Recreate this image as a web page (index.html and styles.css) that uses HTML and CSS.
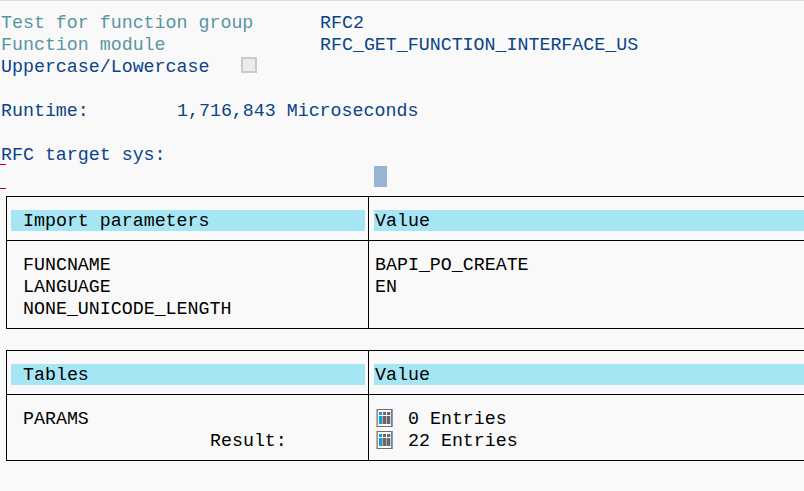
FILE: index.html
```html
<!DOCTYPE html>
<html lang="en">
<head>
<meta charset="utf-8">
<title>Test Function Module: Result Screen</title>
<link rel="stylesheet" href="styles.css">
</head>
<body>
<svg class="defs" width="0" height="0" aria-hidden="true">
  <symbol id="table-icon" viewBox="0 0 17 18">
    <rect x="0" y="0" width="17" height="18" fill="#6c6c72"/>
    <rect x="0" y="0" width="1" height="18" fill="#e0a878"/>
    <rect x="16" y="0" width="1" height="18" fill="#7c9cd0"/>
    <rect x="1" y="1" width="15" height="16" fill="#fff"/>
    <rect x="1" y="1" width="1" height="16" fill="#8294b4"/>
    <rect x="15" y="1" width="1" height="16" fill="#8c7c78"/>
    <rect x="3" y="3" width="3" height="3" fill="#0a9fe3"/>
    <rect x="3" y="7" width="3" height="8" fill="#0a9fe3"/>
    <path d="M7 3h3v3h-3zM7 7h3v8h-3zM11 3h3v3h-3zM11 7h3v8h-3z" fill="#666"/>
    <path d="M6 7h1v8h-1zM10 7h1v8h-1z" fill="#b9b2a8"/>
    <path d="M14 3h1v3h-1zM14 7h1v8h-1z" fill="#b8d5f5"/>
  </symbol>
</svg>
<main class="screen">
  <section class="info">
    <div class="line"><span class="label muted">Test for function group</span><span>RFC2</span></div>
    <div class="line"><span class="label muted">Function module</span><span>RFC_GET_FUNCTION_INTERFACE_US</span></div>
    <div class="line"><span class="case">Uppercase/Lowercase</span><span class="checkbox"></span></div>
    <div class="line"></div>
    <div class="line"><span class="runtime">Runtime:</span><span>1,716,843 Microseconds</span></div>
    <div class="line"></div>
    <div class="line">RFC target sys:</div>
  </section>
  <div class="entry"><span class="field"></span><span class="cursor"></span></div>
  <section class="grid">
    <div class="cell head"><span class="band first">Import parameters</span></div>
    <div class="cell head value"><span class="band">Value</span></div>
    <div class="cell body">
      <div class="line">FUNCNAME</div>
      <div class="line">LANGUAGE</div>
      <div class="line">NONE_UNICODE_LENGTH</div>
    </div>
    <div class="cell body value">
      <div class="line">BAPI_PO_CREATE</div>
      <div class="line">EN</div>
    </div>
  </section>
  <section class="grid">
    <div class="cell head"><span class="band first">Tables</span></div>
    <div class="cell head value"><span class="band">Value</span></div>
    <div class="cell body">
      <div class="line">PARAMS</div>
      <div class="line result">Result:</div>
    </div>
    <div class="cell body value">
      <div class="line"><svg class="icon" aria-hidden="true"><use href="#table-icon"/></svg>0 Entries</div>
      <div class="line"><svg class="icon" aria-hidden="true"><use href="#table-icon"/></svg>22 Entries</div>
    </div>
  </section>
</main>
</body>
</html>
```
FILE: styles.css
```css
* { box-sizing: border-box; }

body {
  margin: 0;
  background: #f9f9f9;
  color: #000;
  font: 18.3px/22px "Courier New", "Liberation Mono", monospace;
  overflow: hidden;
}

.defs { display: block; }

.screen {
  height: 491px;
  border-top: 1px solid #dedede;
  padding-top: 11px;
}

.info {
  padding-left: 1px;
  color: #0b4389;
}

.line {
  display: flex;
  height: 22px;
  white-space: pre;
}

.label { width: 319px; }
.muted { color: #5895a3; }
.case { width: 240px; }
.runtime { width: 176px; }

.checkbox {
  width: 16px;
  height: 16px;
  margin-top: 1px;
  border: 2px solid #cacaca;
  background: #e8edf0;
}

.entry {
  display: flex;
  height: 30px;
}

.field {
  width: 6px;
  height: 25px;
  margin-top: -2px;
  border: solid #e00000;
  border-width: 1px 0;
}

.cursor {
  width: 13px;
  height: 21px;
  margin-left: 368px;
  background: #99b3d2;
}

.grid {
  display: grid;
  grid-template-columns: 361px 1fr;
  margin: 0 0 21px 6px;
  border: solid #000;
  border-width: 1px 0 1px 1px;
}

.value { border-left: 1px solid #000; }

.head {
  height: 44px;
  border-bottom: 1px solid #000;
  padding: 13px 3px 0 4px;
}

.head.value { padding: 13px 0 0 5px; }

.band {
  display: block;
  height: 21px;
  padding-left: 1px;
  background: #a6e6f4;
}

.band.first { padding-left: 12px; }

.body { padding: 13px 0 8px 16px; }
.body.value { padding-left: 6px; }

.result { padding-left: 187px; }

.icon {
  width: 17px;
  height: 18px;
  margin: 1px 15px 0 1px;
}
```
